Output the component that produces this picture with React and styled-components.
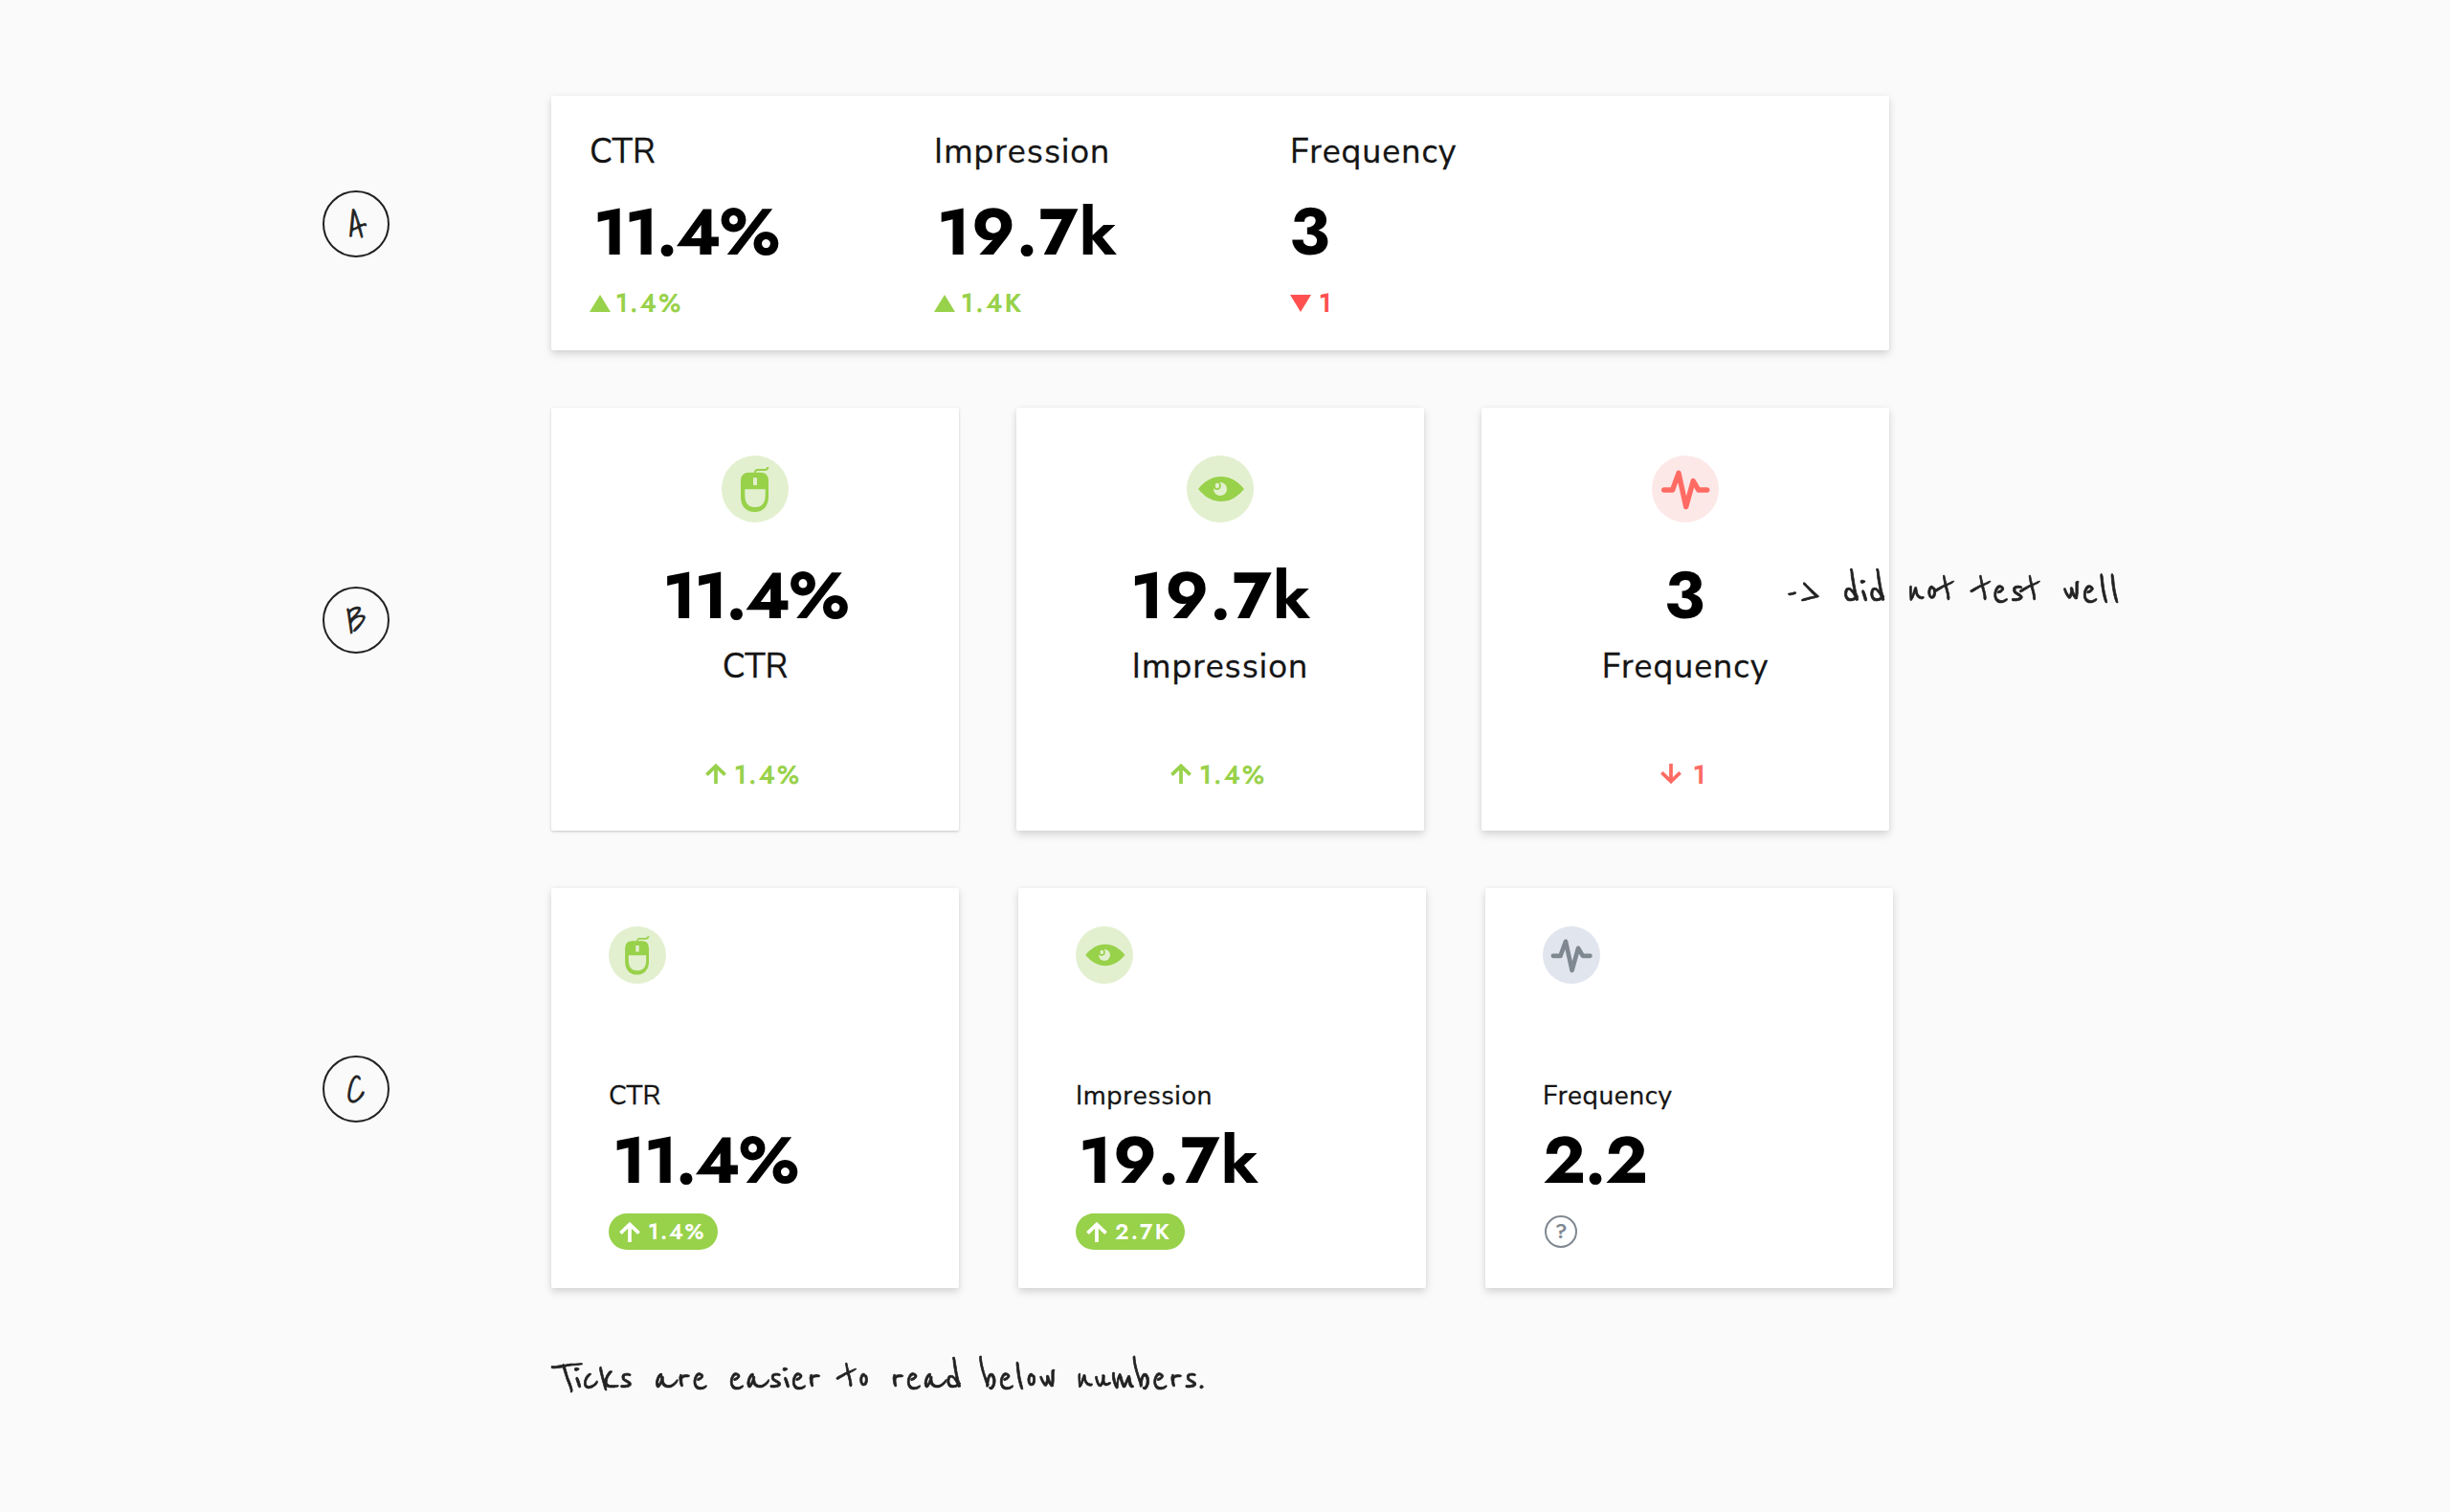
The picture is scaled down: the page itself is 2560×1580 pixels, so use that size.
import React from "react";
import styled, { createGlobalStyle } from "styled-components";

const GREEN = "#98d14a";
const RED = "#ff6b63";
const FIGURE_FONT = `Jost, Inter, "Liberation Sans", sans-serif`;
const LABEL_FONT = `"Nunito Sans", Lato, "Liberation Sans", sans-serif`;
const HAND_FONT = `"Reenie Beanie", Caveat, Lato, cursive`;
const BADGE_FONT = `"Shadows Into Light", Caveat, Lato, cursive`;

const GlobalStyle = createGlobalStyle`
  * { box-sizing: border-box; }
  body { margin: 0; background: #fafafa; }
`;

const Board = styled.main`
  width: 2560px;
  height: 1580px;
  padding: 100px 0 0 337px;
  display: flex;
  flex-direction: column;
  gap: 60px;
  background: #fafafa;
  overflow: hidden;
`;

const Row = styled.section`
  position: relative;
  display: flex;
  align-items: center;
  gap: 169px;
`;

const Badge = styled.div`
  flex: none;
  width: 70px;
  height: 70px;
  margin-top: 2px;
  border: 2px solid #222;
  border-radius: 50%;
  text-align: center;
  font: 400 38px/66px ${BADGE_FONT};
  color: #222;
  -webkit-text-stroke: 0.8px #222;
`;

const Cards = styled.div`
  display: flex;
  gap: ${(p) => p.$gap}px;
`;

const Surface = styled.article`
  background: #fff;
  border-radius: 2px;
  box-shadow: ${(p) =>
    p.$flat ? "0 1px 3px rgba(0,0,0,.22)" : "0 4px 8px rgba(0,0,0,.15), 0 0 4px rgba(0,0,0,.04)"};
`;

const Summary = styled(Surface)`
  width: 1398px;
  height: 266px;
  padding: 38px 40px 0;
  display: grid;
  grid-template-columns: 360px 372px 1fr;
`;

const CenterCard = styled(Surface)`
  width: 426px;
  height: 442px;
  padding-top: 50px;
  display: flex;
  flex-direction: column;
  align-items: center;
`;

const LeftCard = styled(Surface)`
  width: 426px;
  height: 418px;
  padding: 40px 60px 0;
  display: flex;
  flex-direction: column;
  align-items: flex-start;
`;

const Disc = styled.div`
  width: ${(p) => p.$size}px;
  height: ${(p) => p.$size}px;
  border-radius: 50%;
  background: ${(p) => p.$bg};
  svg { display: block; width: 100%; height: 100%; }
`;

const Label = styled.div`
  margin-top: ${(p) => p.$top || 0}px;
  font: 400 ${(p) => (p.$small ? "28px/34px" : "35.5px/42px")} ${LABEL_FONT};
  letter-spacing: ${(p) => p.$track || 0}px;
  color: #141414;
  -webkit-text-stroke: 0.3px #141414;
  white-space: nowrap;
`;

const Figure = styled.div`
  margin-top: ${(p) => p.$top}px;
  margin-left: ${(p) => p.$inset || 0}px;
  font: 700 68.5px/80px ${FIGURE_FONT};
  font-kerning: none;
  letter-spacing: ${(p) => p.$track || 0}px;
  color: #000;
  white-space: nowrap;
`;

const Tick = styled.div`
  margin-top: ${(p) => p.$top}px;
  height: 30px;
  display: flex;
  align-items: flex-start;
  gap: ${(p) => p.$gap}px;
  padding-right: ${(p) => p.$end || 0}px;
  font: 600 26.5px/30px ${FIGURE_FONT};
  letter-spacing: ${(p) => p.$track}px;
  color: ${(p) => p.$color};
  svg { flex: none; margin-top: ${(p) => p.$drop}px; }
`;

const Pill = styled.div`
  margin-top: 15px;
  width: 114px;
  height: 38px;
  padding-left: 11px;
  border-radius: 19px;
  display: flex;
  align-items: center;
  gap: ${(p) => p.$gap}px;
  background: ${GREEN};
  font: 600 23px/39px ${FIGURE_FONT};
  letter-spacing: ${(p) => p.$track}px;
  color: #fff;
  svg { flex: none; }
`;

const Help = styled.div`
  margin: 17px 0 0 2px;
  width: 34px;
  height: 34px;
  border: 2px solid #7f8890;
  border-radius: 50%;
  text-align: center;
  font: 600 21px/31px ${FIGURE_FONT};
  color: #7f8890;
`;

const Annotation = styled.p`
  position: absolute;
  left: 1529px;
  top: 168px;
  margin: 0;
  font: 400 51px/50px ${HAND_FONT};
  letter-spacing: 0.5px;
  white-space: nowrap;
  color: #222;
  -webkit-text-stroke: 0.7px #222;
`;

const Caption = styled.p`
  margin: 5px 0 0 242px;
  font: 400 50px/60px ${HAND_FONT};
  letter-spacing: -0.03px;
  color: #222;
  -webkit-text-stroke: 0.7px #222;
`;

const MouseIcon = () => (
  <svg viewBox="0 0 70 70" fill={GREEN}>
    <path
      fillRule="evenodd"
      d="M29 17.7H40.5Q49 17.7 49 26.5V43C49 53 43.5 59 34.5 59S20 53 20 43V26.5Q20 17.7 29 17.7ZM24.3 35.3V41.5C24.3 49.5 28 54 35 54S45.7 49.5 45.7 41.5V35.3ZM33 23.3V31H37V23.3Z"
    />
    <path d="M35 18.5Q34.8 15 37.5 15H45Q48.4 15 48.4 12" fill="none" stroke={GREEN} strokeWidth="1.9" />
  </svg>
);

const EyeIcon = () => (
  <svg viewBox="0 0 70 70">
    <path d="M12 35C19 26.5 27 22 36 22S53 26.5 60 35C53 43.5 45 48 36 48S19 43.5 12 35Z" fill={GREEN} />
    <circle cx="35" cy="35" r="7" fill="#e3f0d0" />
    <ellipse cx="31.6" cy="31.6" rx="4.3" ry="4.5" fill={GREEN} />
    <ellipse cx="31.9" cy="31.5" rx="2.1" ry="2.7" fill="#e3f0d0" />
  </svg>
);

const PulseIcon = ({ color }) => (
  <svg viewBox="0 0 70 70">
    <path
      d="M12.7 36H21.6L28 18.4L35.7 53.6L43.2 26.6L48.8 36H57.7"
      fill="none"
      stroke={color}
      strokeWidth="5.4"
      strokeLinecap="round"
      strokeLinejoin="round"
    />
  </svg>
);

const Arrow = ({ down }) => (
  <svg width="22" height="21" viewBox="0 0 22 21">
    <path
      d="M11 21V3M1.4 11.7L11 2.4L20.6 11.7"
      transform={down ? "rotate(180 11 10.5)" : undefined}
      fill="none"
      stroke="currentColor"
      strokeWidth="3.7"
    />
  </svg>
);

const Triangle = ({ down }) => (
  <svg width="22" height="18" viewBox="0 0 22 18">
    <path d={down ? "M0 0H22L11 18Z" : "M0 18H22L11 0Z"} fill="currentColor" />
  </svg>
);

const SUMMARY = [
  { label: "CTR", value: "11.4%", track: -1.9, inset: 4, delta: "1.4%", dTrack: 2.1, gap: 5 },
  { label: "Impression", value: "19.7k", track: 1.2, inset: 3, delta: "1.4K", dTrack: 2.3, gap: 6 },
  { label: "Frequency", value: "3", track: 0, inset: -1, delta: "1", dTrack: 0, gap: 8, down: true },
];

const CENTERED = [
  { label: "CTR", value: "11.4%", track: -1.9, delta: "1.4%", icon: <MouseIcon />, flat: true },
  { label: "Impression", value: "19.7k", track: 1.2, inset: 2, delta: "1.4%", icon: <EyeIcon /> },
  { label: "Frequency", value: "3", track: 0, inset: -2, delta: "1", icon: <PulseIcon color={RED} />, down: true },
];

const LEFT = [
  { label: "CTR", value: "11.4%", track: -1.9, inset: 4, delta: "1.4%", dTrack: 1.6, icon: <MouseIcon /> },
  { label: "Impression", value: "19.7k", track: 1.2, inset: 3, delta: "2.7K", dTrack: 2.2, icon: <EyeIcon /> },
  { label: "Frequency", value: "2.2", track: -1, inset: 0, icon: <PulseIcon color="#7f8890" />, gray: true },
];

const labelTrack = (text, wide) => (text === "CTR" ? 0 : wide);

export default function App() {
  return (
    <Board>
      <GlobalStyle />
      <Row>
        <Badge>A</Badge>
        <Summary>
          {SUMMARY.map((m) => (
            <div key={m.label}>
              <Label $track={labelTrack(m.label, 1.05)}>{m.label}</Label>
              <Figure $top={23} $inset={m.inset} $track={m.track}>{m.value}</Figure>
              <Tick $top={19} $gap={m.gap} $drop={6} $track={m.dTrack} $color={m.down ? "#ff5050" : GREEN}>
                <Triangle down={m.down} />
                {m.delta}
              </Tick>
            </div>
          ))}
        </Summary>
      </Row>
      <Row>
        <Badge>B</Badge>
        <Cards $gap={60}>
          {CENTERED.map((m) => (
            <CenterCard key={m.label} $flat={m.flat}>
              <Disc $size={70} $bg={m.down ? "#fde8e8" : "#e3f0d0"}>{m.icon}</Disc>
              <Figure $top={37} $inset={m.inset} $track={m.track}>{m.value}</Figure>
              <Label $top={13} $track={labelTrack(m.label, 1.05)}>{m.label}</Label>
              <Tick
                $top={77}
                $gap={m.down ? 12 : 8}
                $drop={3}
                $end={m.down ? 5 : 4}
                $track={m.down ? 0 : 2}
                $color={m.down ? RED : GREEN}
              >
                <Arrow down={m.down} />
                {m.delta}
              </Tick>
            </CenterCard>
          ))}
        </Cards>
        <Annotation>-&gt; did not test well</Annotation>
      </Row>
      <Row>
        <Badge>C</Badge>
        <Cards $gap={62}>
          {LEFT.map((m) => (
            <LeftCard key={m.label}>
              <Disc $size={60} $bg={m.gray ? "#e1e5ee" : "#e3f0d0"}>{m.icon}</Disc>
              <Label $small $top={100} $track={labelTrack(m.label, 0.6)}>{m.label}</Label>
              <Figure $top={11} $inset={m.inset} $track={m.track}>{m.value}</Figure>
              {m.delta ? (
                <Pill $gap={8} $track={m.dTrack}>
                  <Arrow />
                  {m.delta}
                </Pill>
              ) : (
                <Help>?</Help>
              )}
            </LeftCard>
          ))}
        </Cards>
      </Row>
      <Caption>Ticks are easier to read below numbers.</Caption>
    </Board>
  );
}
